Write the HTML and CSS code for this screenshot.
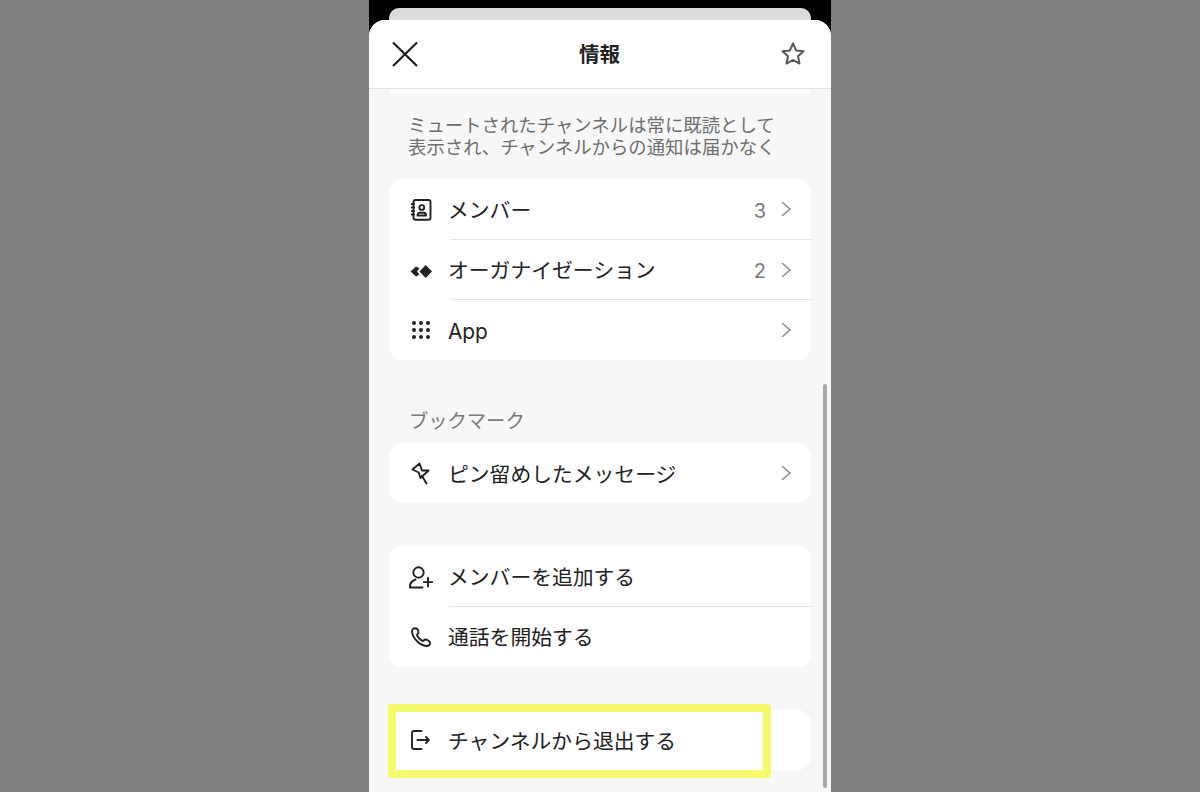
FILE: index.html
```html
<!DOCTYPE html>
<html lang="ja">
<head>
<meta charset="utf-8">
<title>情報</title>
<link rel="stylesheet" href="styles.css">
</head>
<body>
<div class="phone">
  <div class="back-card"></div>
  <div class="sheet">
    <header class="header">
      <svg class="close" width="26" height="26" viewBox="0 0 26 26"><path d="M1 1.500 25 25M25 1.500 1 25"/></svg>
      <h1 class="title">情報</h1>
      <svg class="star" width="26" height="26" viewBox="0 0 26 26"><path d="M13 2.500l3.100 6.900 7.400.9-5.500 5 1.500 7.300L13 19l-6.500 3.600L8 15.300l-5.500-5 7.400-.9z"/></svg>
    </header>
    <div class="content">
      <div class="card-stub"></div>
      <p class="note">ミュートされたチャンネルは常に既読として<br>表示され、チャンネルからの通知は届かなく</p>

      <div class="card first-card">
        <div class="row">
          <svg class="icon" width="24" height="24" viewBox="0 0 24 24"><rect x="4.500" y="2" width="17" height="19.800" rx="2"/><path d="M2.800 6h2.400M2.800 9.500h2.400M2.800 13h2.400M2.800 16.500h2.400"/><circle cx="12.800" cy="9.500" r="2.400"/><path d="M8.500 17.500c0-2 1.200-2.800 2.400-2.800h3.800c1.200 0 2.400.8 2.400 2.800z"/></svg>
          <div class="body"><span class="label">メンバー</span><span class="count">3</span><svg class="chev" width="12" height="18" viewBox="0 0 12 18"><path d="M2 2l8 7-8 7"/></svg></div>
        </div>
        <div class="row">
          <svg class="icon solid" width="24" height="24" viewBox="0 0 24 24"><path d="M16.700 7l6.300 6.500-6.300 6.500-6.300-6.500z"/><path d="M7 8.500l3.500 2L8 13.500l2.500 3L7 18.500l-5.500-5z"/></svg>
          <div class="body"><span class="label">オーガナイゼーション</span><span class="count">2</span><svg class="chev" width="12" height="18" viewBox="0 0 12 18"><path d="M2 2l8 7-8 7"/></svg></div>
        </div>
        <div class="row">
          <svg class="icon solid" width="24" height="24" viewBox="0 0 24 24"><g><circle cx="5" cy="5" r="2"/><circle cx="12" cy="5" r="2"/><circle cx="19" cy="5" r="2"/><circle cx="5" cy="12" r="2"/><circle cx="12" cy="12" r="2"/><circle cx="19" cy="12" r="2"/><circle cx="5" cy="19" r="2"/><circle cx="12" cy="19" r="2"/><circle cx="19" cy="19" r="2"/></g></svg>
          <div class="body"><span class="label">App</span><svg class="chev" width="12" height="18" viewBox="0 0 12 18"><path d="M2 2l8 7-8 7"/></svg></div>
        </div>
      </div>

      <h2 class="section">ブックマーク</h2>
      <div class="card">
        <div class="row single">
          <svg class="icon" width="24" height="24" viewBox="0 0 24 24"><path d="M3.500 8.500l7-6 2.500 7h6.500l-8 7.500-1.800-5.500z"/><path d="M13 15l4.500 7.500"/></svg>
          <div class="body"><span class="label">ピン留めしたメッセージ</span><svg class="chev" width="12" height="18" viewBox="0 0 12 18"><path d="M2 2l8 7-8 7"/></svg></div>
        </div>
      </div>

      <div class="card gap-card">
        <div class="row">
          <svg class="icon" width="24" height="24" viewBox="0 0 24 24"><circle cx="9.500" cy="7.500" r="5.200"/><path d="M1 22.500v-1.500c0-3.500 3-5.500 5.500-6.500M1 22.500h12.500"/><path d="M19 12.800v8.600M14.800 17.100h8.500"/></svg>
          <div class="body"><span class="label">メンバーを追加する</span></div>
        </div>
        <div class="row">
          <svg class="icon" width="24" height="24" viewBox="0 0 24 24"><path d="M7.500 3.500C5 2.500 3 4 3 6.500 3.500 13 10.500 20.500 17.500 21c2.500 0 4-1.500 3.500-3.500-.4-1.300-3-3-4.500-3-1.200 0-1.800 1.500-2.800 1.500-1.500-.2-5.500-4.500-5.700-6 0-1 1.500-1.500 1.500-2.700 0-1-1-3.500-2-3.800z"/></svg>
          <div class="body"><span class="label">通話を開始する</span></div>
        </div>
      </div>

      <div class="card gap-card">
        <div class="row single">
          <svg class="icon" width="24" height="24" viewBox="0 0 24 24"><path d="M12.500 3H5.300a2.300 2.300 0 0 0-2.300 2.300v13.400A2.300 2.300 0 0 0 5.300 21h7.200"/><path d="M8.500 12h11.500M17 9l3 3-3 3"/></svg>
          <div class="body"><span class="label">チャンネルから退出する</span></div>
        </div>
        <div class="highlight"></div>
      </div>
      <div class="scrollbar"></div>
    </div>
  </div>
</div>
</body>
</html>
```

FILE: styles.css
```css
* { box-sizing: border-box; }
html, body { margin: 0; height: 100%; overflow: hidden; }
body {
  background: #808080;
  font-family: Inter, "Noto Sans CJK JP", sans-serif;
  color: #222;
}
.phone {
  width: 462px;
  height: 792px;
  margin: 0 auto;
  background: #000;
  padding-top: 8px;
  overflow: hidden;
}
.back-card {
  height: 12px;
  margin: 0 20px;
  background: #dcdcdc;
  border-radius: 10px 10px 0 0;
}
.sheet {
  height: 772px;
  background: #f7f7f7;
  border-radius: 16px 16px 0 0;
  overflow: hidden;
  display: flex;
  flex-direction: column;
}
.header {
  flex: none;
  height: 69px;
  background: #fff;
  border-bottom: 1px solid #e3e3e3;
  display: grid;
  grid-template-columns: 1fr auto 1fr;
  align-items: center;
  padding: 0 25px 0 23px;
}
.close { fill: none; stroke: #1c1c1c; stroke-width: 2.2; }
.star {
  justify-self: end;
  fill: none;
  stroke: #555;
  stroke-width: 2;
  stroke-linejoin: round;
}
.title {
  margin: 0 0 0 1px;
  padding-top: 2px;
  font-size: 20.5px;
  font-weight: 700;
  line-height: 28px;
  color: #222;
}
.content { position: relative; flex: 1; padding: 0 20px; }
.card-stub {
  height: 6px;
  background: #fff;
  border-radius: 0 0 12px 12px;
}
.note {
  margin: 19px 0 21px;
  padding: 0 0 0 19px;
  font-size: 18.4px;
  line-height: 22px;
  color: #6f6f6f;
  white-space: nowrap;
}
.section {
  margin: 50px 0 11px;
  padding-left: 20px;
  font-size: 19.3px;
  font-weight: 400;
  line-height: 22px;
  color: #7a7a7a;
}
.card {
  position: relative;
  background: #fff;
  border-radius: 14px;
}
.gap-card { margin-top: 43px; }
.row {
  height: 60px;
  display: flex;
  align-items: center;
}
.row:first-child:not(.single) { height: 61px; }
.row:last-child .body, .single .body { border-bottom: 0; }
.icon {
  flex: none;
  margin: 0 17px 0 20px;
  fill: none;
  stroke: #222;
  stroke-width: 1.900;
  stroke-linecap: round;
  stroke-linejoin: round;
}
.icon.solid { fill: #222; stroke: none; }
.body {
  flex: 1;
  height: 100%;
  display: flex;
  align-items: center;
  padding-right: 19px;
  border-bottom: 1px solid #e4e4e4;
}
.label {
  flex: 1;
  margin-left: -2px;
  padding-top: 4px;
  font-size: 20.8px;
  line-height: 28px;
  color: #222;
  white-space: nowrap;
}
.row:nth-child(2) .label { padding-top: 2px; }
.count { padding-top: 3px; font-size: 20px; color: #7c7c7c; margin-right: 14px; }
.chev { fill: none; stroke: #8a8a8a; stroke-width: 1.500; }
.highlight {
  position: absolute;
  left: -1px;
  top: -6px;
  width: 383px;
  height: 74px;
  border: 8.500px solid #f5fb6c;
  border-radius: 3px;
}
.scrollbar {
  position: absolute;
  right: 4px;
  top: 295px;
  width: 4px;
  height: 404px;
  background: #a9a9a9;
  border-radius: 2px;
}
```
